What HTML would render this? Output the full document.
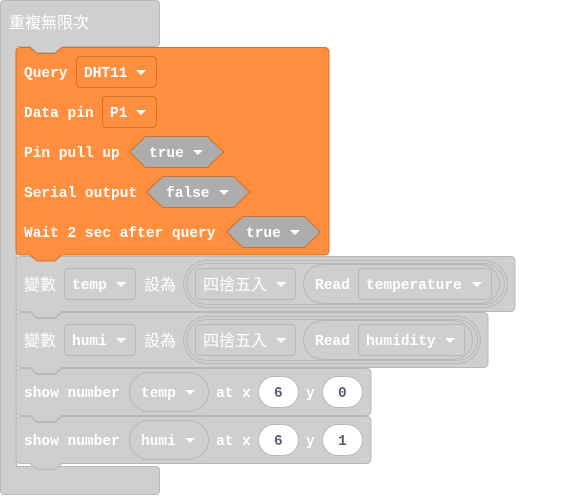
<!DOCTYPE html>
<html><head><meta charset="utf-8"><style>
html,body{margin:0;padding:0;background:#fff;width:567px;height:496px;overflow:hidden}
svg{display:block}
.t{font-family:"Liberation Mono",monospace;font-weight:bold;font-size:14.5px;fill:#fff}
.c{font-family:"Liberation Sans","Noto Sans CJK TC",sans-serif;font-size:16px;fill:#fff}
.n{font-family:"Liberation Mono",monospace;font-weight:bold;font-size:14.5px;fill:#575e75}
</style></head><body>
<svg width="567" height="496" viewBox="0 0 567 496" xmlns="http://www.w3.org/2000/svg">
<defs>
<path id="arr" d="M0 0 h10 l-5 5 z" fill="#fff"/>
</defs>
<!-- outer loop -->
<path d="M4 0.5 H156 a3.5 3.5 0 0 1 3.5 3.5 V43 a3.5 3.5 0 0 1 -3.5 3.5 H62 l-7 6 h-18 l-7 -6 H16.5 V466.5 H156 a3.5 3.5 0 0 1 3.5 3.5 V491 a3.5 3.5 0 0 1 -3.5 3.5 H4 a3.5 3.5 0 0 1 -3.5 -3.5 V4 a3.5 3.5 0 0 1 3.5 -3.5z" fill="#cfcfcf" stroke="#b8b8b8"/>
<text class="c" x="9" y="28">重複無限次</text>
<g fill="#cfcfcf" stroke="#b8b8b8">
<path d="M20 256.5 H511 a4 4 0 0 1 4 4 V307.5 a4 4 0 0 1 -4 4 H62 l-7 6 h-18 l-7 -6 H20 a4 4 0 0 1 -4 -4 V260.5 a4 4 0 0 1 4 -4z"/>
<path d="M20 312.5 H30 l7 6 h18 l7 -6 H484 a4 4 0 0 1 4 4 V363.5 a4 4 0 0 1 -4 4 H62 l-7 6 h-18 l-7 -6 H20 a4 4 0 0 1 -4 -4 V316.5 a4 4 0 0 1 4 -4z"/>
<path d="M20 368.5 H30 l7 6 h18 l7 -6 H367 a4 4 0 0 1 4 4 V411.5 a4 4 0 0 1 -4 4 H62 l-7 6 h-18 l-7 -6 H20 a4 4 0 0 1 -4 -4 V372.5 a4 4 0 0 1 4 -4z"/>
<path d="M20 416.5 H30 l7 6 h18 l7 -6 H367 a4 4 0 0 1 4 4 V459.5 a4 4 0 0 1 -4 4 H62 l-7 6 h-18 l-7 -6 H20 a4 4 0 0 1 -4 -4 V420.5 a4 4 0 0 1 4 -4z"/>
</g>
<!-- orange block -->
<path d="M20 47.5 H30 l7 6 h18 l7 -6 H325 a4 4 0 0 1 4 4 V251 a4 4 0 0 1 -4 4 H62 l-7 6 h-18 l-7 -6 H20 a4 4 0 0 1 -4 -4 V51.5 a4 4 0 0 1 4 -4z" fill="#ff8f3f" stroke="#cc7232"/>
<text class="t" x="24" y="77">Query</text>
<rect x="76.5" y="56.5" width="80" height="31" rx="4" fill="#ff8f3f" stroke="#cc7232"/>
<text class="t" x="84" y="77">DHT11</text><use href="#arr" x="136" y="70"/>
<text class="t" x="24" y="117">Data pin</text>
<rect x="102.5" y="96.5" width="54" height="31" rx="4" fill="#ff8f3f" stroke="#cc7232"/>
<text class="t" x="110" y="117">P1</text><use href="#arr" x="136" y="110"/>
<text class="t" x="24" y="157">Pin pull up</text>
<path d="M129.5 152 L145.5 136.5 H207.5 L223.5 152 L207.5 167.5 H145.5z" fill="#adadad" stroke="#cc7232"/>
<text class="t" x="149" y="157">true</text><use href="#arr" x="193" y="150"/>
<text class="t" x="24" y="197">Serial output</text>
<path d="M146.5 192 L162.5 176.5 H233.5 L249.5 192 L233.5 207.5 H162.5z" fill="#adadad" stroke="#cc7232"/>
<text class="t" x="166" y="197">false</text><use href="#arr" x="219" y="190"/>
<text class="t" x="24" y="237">Wait 2 sec after query</text>
<path d="M226.5 232 L242.5 216.5 H304.5 L320.5 232 L304.5 247.5 H242.5z" fill="#adadad" stroke="#cc7232"/>
<text class="t" x="246" y="237">true</text><use href="#arr" x="290" y="230"/>
<g fill="none" stroke="#b8b8b8">
<rect x="64.5" y="268.5" width="71" height="31" rx="4"/>
<rect x="183.5" y="260.5" width="324" height="47" rx="23.5"/>
<rect x="186.5" y="263.5" width="318" height="41" rx="20.5"/>
<rect x="195.5" y="268.5" width="100" height="31" rx="4"/>
<rect x="303.5" y="264.5" width="196" height="39" rx="19.5"/>
<rect x="358.5" y="268.5" width="133" height="31" rx="4"/>
<rect x="64.5" y="324.5" width="71" height="31" rx="4"/>
<rect x="183.5" y="316.5" width="297" height="47" rx="23.5"/>
<rect x="186.5" y="319.5" width="291" height="41" rx="20.5"/>
<rect x="195.5" y="324.5" width="100" height="31" rx="4"/>
<rect x="303.5" y="320.5" width="169" height="39" rx="19.5"/>
<rect x="358.5" y="324.5" width="106" height="31" rx="4"/>
<rect x="129.5" y="372.5" width="79" height="39" rx="19.5"/>
<rect x="129.5" y="420.5" width="79" height="39" rx="19.5"/>
</g>
<text class="c" x="24" y="290">變數</text>
<text class="t" x="72" y="289">temp</text><use href="#arr" x="116" y="282"/>
<text class="c" x="144" y="290">設為</text>
<text class="c" x="203" y="290">四捨五入</text><use href="#arr" x="276" y="282"/>
<text class="t" x="315" y="289">Read</text>
<text class="t" x="366" y="289">temperature</text><use href="#arr" x="472" y="282"/>
<text class="c" x="24" y="346">變數</text>
<text class="t" x="72" y="345">humi</text><use href="#arr" x="116" y="338"/>
<text class="c" x="144" y="346">設為</text>
<text class="c" x="203" y="346">四捨五入</text><use href="#arr" x="276" y="338"/>
<text class="t" x="315" y="345">Read</text>
<text class="t" x="366" y="345">humidity</text><use href="#arr" x="445" y="338"/>
<text class="t" x="24" y="397">show number</text>
<text class="t" x="141" y="397">temp</text><use href="#arr" x="185" y="390"/>
<text class="t" x="216" y="397">at x</text>
<rect x="258.5" y="376.5" width="40" height="31" rx="15.5" fill="#fff" stroke="#b8b8b8"/>
<text class="n" x="274" y="397">6</text>
<text class="t" x="306" y="397">y</text>
<rect x="322.5" y="376.5" width="40" height="31" rx="15.5" fill="#fff" stroke="#b8b8b8"/>
<text class="n" x="338" y="397">0</text>
<text class="t" x="24" y="445">show number</text>
<text class="t" x="141" y="445">humi</text><use href="#arr" x="185" y="438"/>
<text class="t" x="216" y="445">at x</text>
<rect x="258.5" y="424.5" width="40" height="31" rx="15.5" fill="#fff" stroke="#b8b8b8"/>
<text class="n" x="274" y="445">6</text>
<text class="t" x="306" y="445">y</text>
<rect x="322.5" y="424.5" width="40" height="31" rx="15.5" fill="#fff" stroke="#b8b8b8"/>
<text class="n" x="338" y="445">1</text>
</svg>
</body></html>
